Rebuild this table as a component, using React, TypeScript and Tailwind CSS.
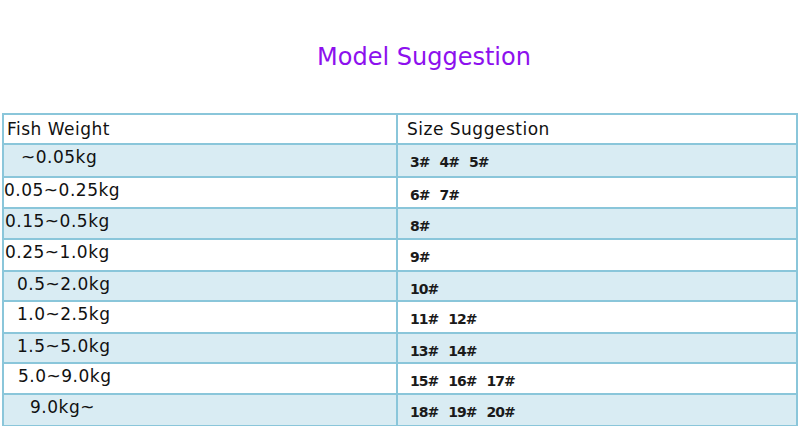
import React from "react";

const rows: { w: string; pad: string; s: string[]; h: string; bg: string }[] = [
  { w: "~0.05kg", pad: "pl-[17px]", s: ["3#", "4#", "5#"], h: "h-[33px]", bg: "bg-[#d9ecf3]" },
  { w: "0.05~0.25kg", pad: "pl-[0px]", s: ["6#", "7#"], h: "h-[31px]", bg: "bg-white" },
  { w: "0.15~0.5kg", pad: "pl-[1px]", s: ["8#"], h: "h-[31px]", bg: "bg-[#d9ecf3]" },
  { w: "0.25~1.0kg", pad: "pl-[1px]", s: ["9#"], h: "h-[32px]", bg: "bg-white" },
  { w: "0.5~2.0kg", pad: "pl-[13px]", s: ["10#"], h: "h-[30px]", bg: "bg-[#d9ecf3]" },
  { w: "1.0~2.5kg", pad: "pl-[13px]", s: ["11#", "12#"], h: "h-[32px]", bg: "bg-white" },
  { w: "1.5~5.0kg", pad: "pl-[13px]", s: ["13#", "14#"], h: "h-[30px]", bg: "bg-[#d9ecf3]" },
  { w: "5.0~9.0kg", pad: "pl-[14px]", s: ["15#", "16#", "17#"], h: "h-[31px]", bg: "bg-white" },
  { w: "9.0kg~", pad: "pl-[26px]", s: ["18#", "19#", "20#"], h: "h-[30px]", bg: "bg-[#d9ecf3]" },
];

export default function App() {
  return (
    <div className="w-[800px] h-[426px] bg-white overflow-hidden" style={{ fontFamily: '"DejaVu Sans", Verdana, sans-serif' }}>
      <div className="h-[113px] flex justify-center pl-[48px] pt-[42px]">
        <div className="text-[24px] leading-[30px] text-[#8d10ee]">Model Suggestion</div>
      </div>
      <div className="ml-[2px] w-[796px] border-2 border-[#8ac6da] flex flex-col">
        <div className="flex h-[30px] border-b-2 border-[#8ac6da] bg-white text-[#111] text-[17px] tracking-[0.5px]">
          <div className="w-[394px] border-r-2 border-[#8ac6da] pl-[3px] pt-[4px] leading-[20px]">Fish Weight</div>
          <div className="flex-1 pl-[9px] pt-[4px] leading-[20px]">Size Suggestion</div>
        </div>
        {rows.map((r, i) => (
          <div
            key={i}
            className={`flex ${r.h} ${r.bg} ${i < rows.length - 1 ? "border-b-2 border-[#8ac6da]" : ""}`}
          >
            <div className={`w-[394px] border-r-2 border-[#8ac6da] ${r.pad} pt-[2px] text-[17px] leading-[20px] tracking-[0.5px] text-[#111]`}>
              {r.w}
            </div>
            <div className="flex-1 pl-[12px] pt-[8px] flex gap-[10px] text-[14px] leading-[18px] font-bold tracking-[-1px] text-[#1a1a1a]">
              {r.s.map((t, j) => (
                <span key={j}>{t}</span>
              ))}
            </div>
          </div>
        ))}
      </div>
    </div>
  );
}
